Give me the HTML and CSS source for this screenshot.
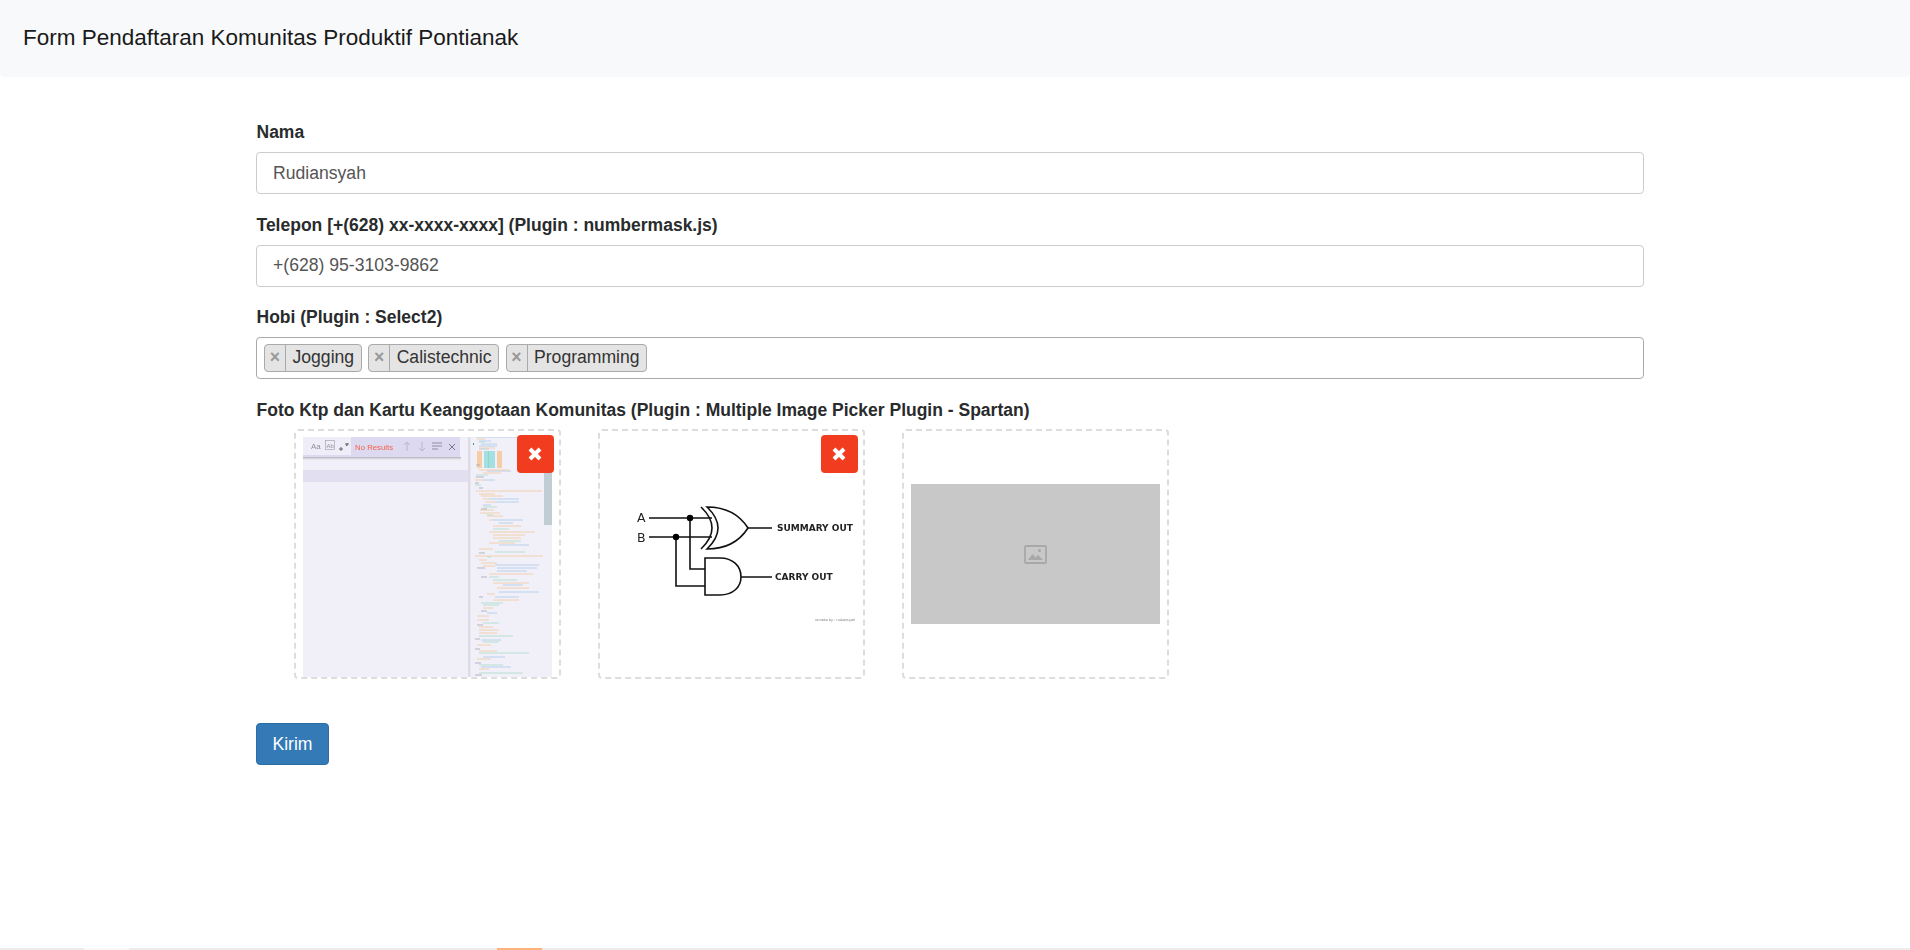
FILE: index.html
```html
<!DOCTYPE html>
<html lang="en">

<head>
    <meta charset="UTF-8">
    <meta name="viewport" content="width=device-width, initial-scale=1.0">
    <title>Form Pendaftaran Komunitas Produktif Pontianak</title>
    <link rel="stylesheet" href="styles.css">
</head>

<body>
    <nav class="navbar">Form Pendaftaran Komunitas Produktif Pontianak</nav>

    <form class="mainForm" onsubmit="return false;">
        <div class="formGroup">
            <label for="nama">Nama</label>
            <input type="text" id="nama" class="formControl" value="Rudiansyah">
        </div>

        <div class="formGroup">
            <label for="telepon">Telepon [+(628) xx-xxxx-xxxx] (Plugin : numbermask.js)</label>
            <input type="text" id="telepon" class="formControl" value="+(628) 95-3103-9862">
        </div>

        <div class="formGroup">
            <label>Hobi (Plugin : Select2)</label>
            <div class="tagSelect">
                <span class="tag"><span class="tagRemove">&times;</span><span class="tagText">Jogging</span></span>
                <span class="tag"><span class="tagRemove">&times;</span><span class="tagText">Calistechnic</span></span>
                <span class="tag"><span class="tagRemove">&times;</span><span class="tagText">Programming</span></span>
            </div>
        </div>

        <label>Foto Ktp dan Kartu Keanggotaan Komunitas (Plugin : Multiple Image Picker Plugin - Spartan)</label>
        <div class="pickerRow">
            <!-- editor screenshot -->
            <div class="pickerCard">
                <svg class="pickerImage" viewBox="0 0 249 240">
                    <defs>
                        <linearGradient id="barShadow" x1="0" y1="0" x2="0" y2="1">
                            <stop offset="0" stop-color="#9c9ba6" stop-opacity="0.8" />
                            <stop offset="1" stop-color="#f1f0f8" stop-opacity="0" />
                        </linearGradient>
                    </defs>
                    <rect width="249" height="240" fill="#f1f0f8" />
                    <rect y="33" width="165" height="12" fill="#e1dff0" />
                    <rect y="20" width="158" height="4" fill="url(#barShadow)" />
                    <rect width="157" height="20" fill="#dcd9f0" />
                    <rect width="48" height="18" fill="#efeef8" />
                    <text x="8" y="12" class="findText">Aa</text>
                    <rect x="22.5" y="3.5" width="9" height="9" fill="none" stroke="#a5a5b0" stroke-width="0.7" />
                    <text x="23.5" y="11" class="findText findSmall">Ab</text>
                    <path d="M37 13h2v-2h-2zM43 8l1 1M44 6v3M42 7h4" stroke="#666" stroke-width="1" fill="none" />
                    <text x="52" y="12.500" class="findError">No Results</text>
                    <path d="M104 14V5M101 8l3-3 3 3M119 5v9M116 11l3 3 3-3" stroke="#b9b7cc" stroke-width="1" fill="none" />
                    <path d="M129 6h10M129 9h10M129 12h6" stroke="#8f8fa0" stroke-width="1" fill="none" />
                    <path d="M146 7l6 6M152 7l-6 6" stroke="#77778a" stroke-width="1" fill="none" />
                    <rect x="165" width="2" height="240" fill="#dcdbe6" />
                    <rect x="167" width="1" height="240" fill="#e8e7f0" />

                    <!-- minimap -->
                    <rect x="174" y="14" width="5" height="17" fill="#f5cda6" />
                    <rect x="181" y="14" width="11" height="17" fill="#a3dfe3" />
                    <rect x="185" y="14" width="1" height="17" fill="#8fd8b8" />
                    <rect x="194" y="14" width="5" height="17" fill="#f5cda6" />
                    <rect x="170" y="6" width="1" height="2" fill="#33a66a" />
                    <path class="miniLine miniBlue" d="M173 0h70M176 4h12M178 7h16M176 9h18M176 12h10M184 34h24M180 43h12M180 68h8M186 62h30M192 65h24M190 83h30M196 86h14M196 108h30M192 128h44M194 131h40M194 134h30M200 148h20M196 155h40M192 160h24M184 176h10M178 203h20M180 220h22M178 230h30" />
                    <path class="miniLine miniOrange" d="M174 2h8M176 11h16M176 33h30M180 36h18M172 43h8M173 54h66M176 57h16M178 59h22M180 62h6M182 65h10M177 73h14M177 76h20M184 79h16M186 83h4M190 89h28M186 95h46M190 98h32M190 101h28M186 106h26M176 112h14M172 119h68M176 123h8M178 126h16M180 129h12M186 137h44M190 146h36M194 151h32M184 157h8M190 163h26M180 171h10M174 179h12M174 183h12M176 190h14M176 193h20M176 196h18M174 208h14M176 214h18M174 222h14M176 232h10" />
                    <path class="miniLine miniGreen" d="M176 5h6M173 38h12M172 48h6M180 70h14M184 78h6M190 92h16M196 104h22M192 115h30M184 120h4M186 140h10M190 143h24M178 166h22M180 168h16M180 186h16M176 199h34M180 205h16M176 216h50M176 228h24M176 236h44" />
                    <path class="miniLine miniGrey" d="M173 28h4M173 40h8M172 46h4M176 51h4M178 72h6M176 116h6M174 131h8M178 140h6M176 160h4M178 174h6M174 188h6M172 202h5M172 212h5M172 226h6M172 238h7" />
                    <rect x="241" width="8" height="88" fill="#c0cdd4" />
                </svg>
                <span class="removeButton">
                    <svg viewBox="0 0 14 14"><path d="M2 2l10 10M12 2L2 12" /></svg>
                </span>
            </div>

            <!-- half adder diagram -->
            <div class="pickerCard">
                <svg class="pickerImage" viewBox="0 0 249 240">
                    <rect width="249" height="240" fill="#fff" />
                    <g class="circuit">
                        <path d="M42 81H105M42 100H105M83 81V132H98M69 100V149H98" />
                        <path d="M94 70Q116 91 94 112" />
                        <path d="M100 70C118 70 132 77 141 91C132 105 118 112 100 112Q122 91 100 70Z" />
                        <path d="M98 121H113C126 121 134 129 134 140C134 150 126 158 113 158H98Z" />
                        <path d="M141 91H165M134 140H165" />
                    </g>
                    <circle cx="83" cy="81" r="3.200" fill="#000" />
                    <circle cx="69" cy="100" r="3.200" fill="#000" />
                    <text x="30" y="85" class="circuitLetter">A</text>
                    <text x="30" y="105" class="circuitLetter">B</text>
                    <text x="170" y="94" class="circuitLabel">SUMMARY OUT</text>
                    <text x="168" y="143" class="circuitLabel">CARRY OUT</text>
                    <text x="208" y="184" class="circuitNote">remake by : rudiansyah</text>
                </svg>
                <span class="removeButton">
                    <svg viewBox="0 0 14 14"><path d="M2 2l10 10M12 2L2 12" /></svg>
                </span>
            </div>

            <!-- empty slot -->
            <div class="pickerCard pickerEmpty">
                <div class="placeholder">
                    <svg class="placeholderIcon" viewBox="0 0 23 19">
                        <rect x="1" y="1" width="21" height="17" rx="1" fill="none" stroke="#a8a8a8" stroke-width="1.800" />
                        <path d="M4 15l4.500-6 3 3.500 2.500-2.500 5 5z" fill="#a8a8a8" />
                        <circle cx="15.500" cy="5.500" r="1.500" fill="#a8a8a8" />
                    </svg>
                </div>
            </div>
        </div>

        <button type="submit" class="submitButton">Kirim</button>
    </form>

    <div class="bottomStrip">
        <span class="stripLight"></span>
        <span class="stripOrange"></span>
    </div>
</body>

</html>
```

FILE: styles.css
```css
* {
    box-sizing: border-box;
}

body {
    margin: 0;
    height: 950px;
    overflow: hidden;
    display: flex;
    flex-direction: column;
    background: #fff;
    color: #292b2c;
    font-family: "Liberation Sans", Arial, sans-serif;
    font-size: 17.5px;
}

.navbar {
    height: 77px;
    padding: 0 23px 2px;
    display: flex;
    align-items: center;
    background: #f8f9fa;
    border-radius: 0 0 5px 5px;
    font-size: 22.5px;
    color: #1a1a1a;
}

.mainForm {
    width: 1388px;
    margin-left: 256px;
    padding-top: 42px;
}

.formGroup {
    margin-bottom: 17.5px;
}

label {
    display: block;
    height: 26px;
    line-height: 26px;
    margin-bottom: 7px;
    padding-left: 0.5px;
    font-weight: bold;
}

.formControl {
    display: block;
    width: 100%;
    height: 42px;
    padding: 0 16px;
    border: 1px solid #ccc;
    border-radius: 4px;
    font-family: inherit;
    font-size: 17.6px;
    color: #555;
    background: #fff;
}

.tagSelect {
    height: 42px;
    padding: 0 7px;
    display: flex;
    align-items: center;
    gap: 6.5px;
    border: 1px solid #aaa;
    border-radius: 4px;
    font-size: 17.6px;
}

.tag {
    height: 28px;
    display: flex;
    align-items: stretch;
    background: #e4e4e4;
    border: 1px solid #aaa;
    border-radius: 4px;
    line-height: 25px;
}

.tagRemove {
    width: 21px;
    border-right: 1px solid #aaa;
    text-align: center;
    font-weight: bold;
    color: #999;
}

.tagText {
    padding: 0 6.5px;
    color: #333;
}

.pickerRow {
    display: flex;
    gap: 37.5px;
    margin-left: 38px;
    margin-top: -0.5px;
}

.pickerCard {
    position: relative;
    width: 266.5px;
    height: 250px;
    padding: 6px 7px 0;
    border: 2px dashed #ddd;
    border-radius: 4px;
}

.pickerImage {
    display: block;
    width: 249px;
    height: 240px;
    filter: blur(0.35px);
}

.pickerEmpty {
    display: flex;
    align-items: center;
    padding: 0 7px;
}

.placeholder {
    width: 249px;
    height: 140px;
    display: flex;
    align-items: center;
    justify-content: center;
    background: #c8c8c8;
}

.placeholderIcon {
    width: 23px;
    height: 19px;
    margin-top: 1px;
    filter: blur(0.3px);
}

.removeButton {
    position: absolute;
    top: 4px;
    right: 5px;
    width: 37px;
    height: 38px;
    display: flex;
    align-items: center;
    justify-content: center;
    background: #f13c20;
    border-radius: 4px;
}

.removeButton svg {
    width: 14px;
    height: 14px;
}

.removeButton path {
    fill: none;
    stroke: #fff;
    stroke-width: 4;
}

.findText {
    font-family: "Liberation Sans", Arial, sans-serif;
    font-size: 8px;
    fill: #8f8f9c;
}

.findSmall {
    font-size: 6px;
}

.findError {
    font-family: "Liberation Sans", Arial, sans-serif;
    font-size: 7.800px;
    fill: #f4634a;
}

.miniLine {
    fill: none;
    stroke-width: 0.8;
}

.miniBlue {
    stroke: #a9c9e8;
}

.miniOrange {
    stroke: #f2c79a;
}

.miniGreen {
    stroke: #a7dcc7;
}

.miniGrey {
    stroke: #a5a5b5;
}

.circuit path {
    fill: none;
    stroke: #111;
    stroke-width: 1.600;
}

.circuitLetter {
    font-family: "DejaVu Sans", sans-serif;
    font-size: 12.500px;
    fill: #222;
}

.circuitLabel {
    font-family: "DejaVu Sans", sans-serif;
    font-weight: bold;
    font-size: 9px;
    fill: #222;
}

.circuitNote {
    font-family: "DejaVu Sans", sans-serif;
    font-size: 3.400px;
    fill: #777;
}

.submitButton {
    display: block;
    width: 73px;
    height: 42px;
    margin-top: 44px;
    padding: 0;
    background: #337ab7;
    border: 1px solid #2e6da4;
    border-radius: 4px;
    color: #fff;
    font-family: inherit;
    font-size: 17.6px;
    cursor: pointer;
}

.bottomStrip {
    height: 2px;
    margin-top: auto;
    display: flex;
    background: #ececec;
}

.stripLight {
    width: 45px;
    margin-left: 84px;
    background: #f8f8f8;
}

.stripOrange {
    width: 45px;
    margin-left: 368px;
    background: #ffb27a;
}
```
